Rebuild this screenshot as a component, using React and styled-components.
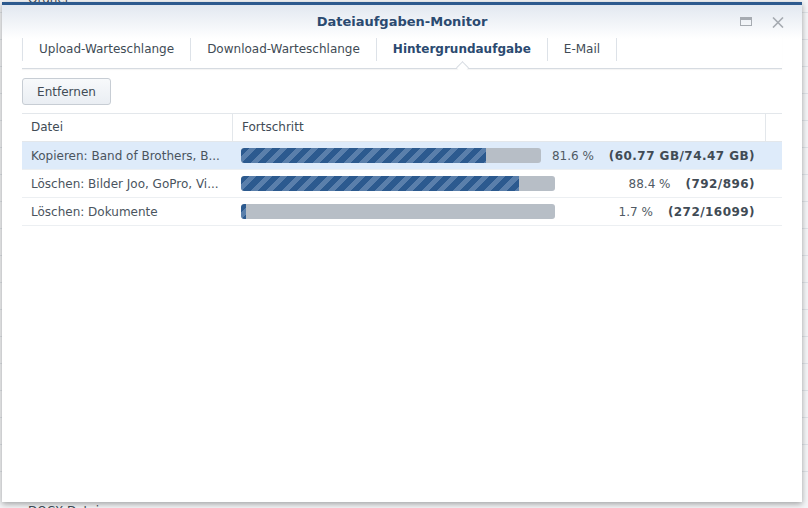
import React from "react";
import styled, { createGlobalStyle } from "styled-components";

const GlobalStyle = createGlobalStyle`
    html, body {
        margin: 0;
        padding: 0;
    }
    body {
        font-family: "DejaVu Sans", Verdana, sans-serif;
        background: #ffffff;
    }
`;

const tabs = [
    { label: "Upload-Warteschlange" },
    { label: "Download-Warteschlange" },
    { label: "Hintergrundaufgabe", active: true },
    { label: "E-Mail" }
];

const jobs = [
    { name: "Kopieren: Band of Brothers, B...", pct: 81.6, count: "(60.77 GB/74.47 GB)", selected: true },
    { name: "Löschen: Bilder Joo, GoPro, Vi...", pct: 88.4, count: "(792/896)" },
    { name: "Löschen: Dokumente", pct: 1.7, count: "(272/16099)" }
];

const backdropRows = ["Ordner", "", "", "", "", "", "", "", "", "", "", "", "", "", "", "", "", "", "DOCX-Datei"];

export default function App() {
    return (
        <>
            <GlobalStyle />
            <Desktop>
                <Backdrop>
                    {backdropRows.map((r, i) => (
                        <BackdropRow key={i}>{r}</BackdropRow>
                    ))}
                </Backdrop>

                <Window>
                    <TitleBar>
                        <Title>Dateiaufgaben-Monitor</Title>
                        <Controls>
                            <svg width="12" height="9" viewBox="0 0 12 9">
                                <rect x="0.5" y="0.5" width="11" height="8" fill="none" stroke="#a6abb1" />
                                <rect x="1" y="1" width="10" height="2" fill="#a6abb1" />
                            </svg>
                            <svg width="12" height="11" viewBox="0 0 12 11">
                                <path d="M1 0.5 L11 10.5 M11 0.5 L1 10.5" stroke="#a6abb1" strokeWidth="1.6" />
                            </svg>
                        </Controls>
                    </TitleBar>

                    <TabBar>
                        {tabs.map(t => (
                            <Tab key={t.label} $active={t.active}>
                                {t.label}
                                {t.active && <Notch />}
                            </Tab>
                        ))}
                    </TabBar>

                    <Toolbar>
                        <Button>Entfernen</Button>
                    </Toolbar>

                    <Grid>
                        <HeaderRow>
                            <HeadCell>Datei</HeadCell>
                            <HeadCell $divider>Fortschritt</HeadCell>
                            <HeadCell $divider />
                        </HeaderRow>
                        {jobs.map(job => (
                            <Row key={job.name} $selected={job.selected}>
                                <NameCell>{job.name}</NameCell>
                                <ProgressCell>
                                    <Bar>
                                        <Fill style={{ width: job.pct + "%" }} />
                                    </Bar>
                                    <Stats>
                                        <span>{job.pct} %</span>
                                        <Count>{job.count}</Count>
                                    </Stats>
                                </ProgressCell>
                            </Row>
                        ))}
                    </Grid>
                </Window>
            </Desktop>
        </>
    );
}

const Desktop = styled.div`
    position: relative;
    width: 808px;
    height: 508px;
    overflow: hidden;
    background: #f4f5f7;
`;

const Backdrop = styled.div`
    margin-top: -14px;
`;

const BackdropRow = styled.div`
    height: 27px;
    line-height: 27px;
    padding-left: 28px;
    box-sizing: border-box;
    border-bottom: 1px solid #dfe3e8;
    font-size: 12px;
    color: #414b55;
    &:last-child {
        line-height: 78px;
        border-bottom: none;
    }
`;

const Window = styled.div`
    position: absolute;
    left: 2px;
    top: 2px;
    width: 800px;
    height: 500px;
    box-sizing: border-box;
    border-top: 3px solid #2d5a8e;
    background: linear-gradient(#e2e8f0 0px, #ffffff 34px, #ffffff 100%);
    box-shadow: 0 2px 6px rgba(0, 0, 0, 0.35);
    padding: 0 20px;
    display: flex;
    flex-direction: column;
`;

const TitleBar = styled.div`
    height: 32px;
    display: flex;
    align-items: center;
    justify-content: center;
    position: relative;
`;

const Title = styled.div`
    font-size: 13px;
    font-weight: bold;
    color: #2b4a70;
`;

const Controls = styled.div`
    position: absolute;
    right: -2px;
    top: 12px;
    display: flex;
    gap: 20px;
    align-items: flex-start;
`;

const TabBar = styled.div`
    display: flex;
    height: 30px;
    padding-top: 1px;
    border-bottom: 1px solid #d6dbe1;
    box-shadow: 0 1px 1px rgba(0, 0, 0, 0.04);
`;

const Tab = styled.div`
    position: relative;
    padding: 0 16px;
    height: 23px;
    line-height: 23px;
    font-size: 12px;
    color: ${p => (p.$active ? "#2b4a70" : "#414b55")};
    font-weight: ${p => (p.$active ? "bold" : "normal")};
    border-right: 1px solid #dde2e8;
    &:first-child {
        border-left: 1px solid #dde2e8;
    }
`;

const Notch = styled.span`
    position: absolute;
    left: 50%;
    bottom: -11px;
    width: 8px;
    height: 8px;
    margin-left: -4px;
    background: #ffffff;
    border-left: 1px solid #d6dbe1;
    border-top: 1px solid #d6dbe1;
    transform: rotate(45deg);
`;

const Toolbar = styled.div`
    padding: 9px 0 8px;
    display: flex;
`;

const Button = styled.button`
    height: 27px;
    width: 89px;
    border: 1px solid #c7cdd4;
    border-radius: 3px;
    background: linear-gradient(#f7f9fb, #eaeef3);
    font-family: "DejaVu Sans", Verdana, sans-serif;
    font-size: 12px;
    color: #414b55;
    padding: 0;
`;

const Grid = styled.div`
    border-top: 1px solid #e3e7eb;
`;

const HeaderRow = styled.div`
    display: grid;
    grid-template-columns: 210px 1fr 17px;
    height: 27px;
    border-bottom: 1px solid #e3e7eb;
`;

const HeadCell = styled.div`
    padding-left: 9px;
    line-height: 26px;
    font-size: 12px;
    color: #414b55;
    border-left: ${p => (p.$divider ? "1px solid #e3e7eb" : "none")};
`;

const Row = styled.div`
    display: grid;
    grid-template-columns: 210px 1fr;
    height: 27px;
    align-items: center;
    border-bottom: 1px solid #eceff2;
    background: ${p => (p.$selected ? "#deebfa" : "transparent")};
`;

const NameCell = styled.div`
    padding-left: 9px;
    font-size: 12px;
    color: #4a545e;
    white-space: nowrap;
    overflow: hidden;
`;

const ProgressCell = styled.div`
    display: flex;
    align-items: center;
    padding: 0 27px 0 9px;
    gap: 11px;
`;

const Bar = styled.div`
    flex: 1;
    height: 15px;
    border-radius: 3px;
    background: #b7bec6;
    overflow: hidden;
`;

const Fill = styled.div`
    height: 100%;
    border-radius: 3px 0 0 3px;
    background: repeating-linear-gradient(
        135deg,
        #2c5a8f 0px,
        #2c5a8f 6px,
        #5a7fab 6px,
        #5a7fab 11px
    );
`;

const Stats = styled.div`
    min-width: 189px;
    display: flex;
    justify-content: flex-end;
    gap: 15px;
    font-size: 12px;
    color: #505a64;
    white-space: nowrap;
`;

const Count = styled.span`
    font-weight: bold;
    letter-spacing: 0.45px;
    color: #414b55;
`;
